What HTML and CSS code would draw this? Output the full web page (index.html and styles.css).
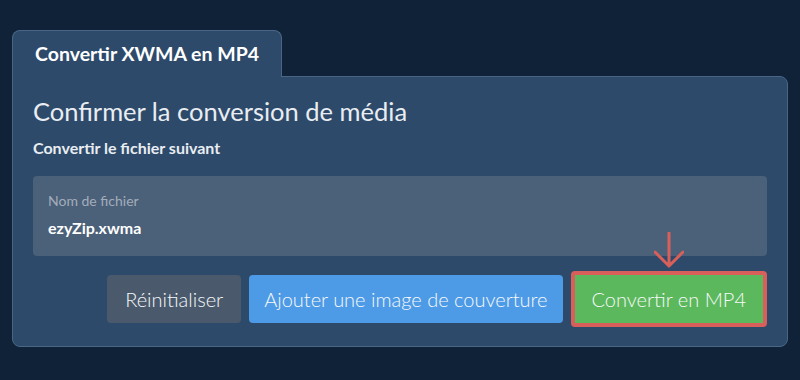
FILE: index.html
```html
<!DOCTYPE html>
<html lang="fr">
<head>
    <meta charset="UTF-8">
    <meta name="viewport" content="width=device-width, initial-scale=1.0">
    <title>Convertir XWMA en MP4</title>
    <link rel="stylesheet" href="styles.css">
</head>
<body>
    <div class="wrapper">
        <div class="tab">Convertir XWMA en MP4</div>
        <div class="card">
            <h1>Confirmer la conversion de média</h1>
            <p class="subtitle">Convertir le fichier suivant</p>
            <div class="file-box">
                <div class="file-label">Nom de fichier</div>
                <div class="file-name">ezyZip.xwma</div>
            </div>
            <div class="actions">
                <button class="btn btn-reset">Réinitialiser</button>
                <button class="btn btn-cover">Ajouter une image de couverture</button>
                <div class="convert-wrap">
                    <!-- pointer arrow over the main button -->
                    <svg class="pointer" width="30" height="36" viewBox="0 0 30 36">
                        <path d="M15 1 V34 M1 20 L15 34 L29 20" fill="none" stroke="#d9605a" stroke-width="3" stroke-linecap="round" stroke-linejoin="round"/>
                    </svg>
                    <button class="btn btn-convert">Convertir en MP4</button>
                </div>
            </div>
        </div>
    </div>
</body>
</html>
```

FILE: styles.css
```css
body {
    font-family: Lato, "Open Sans", sans-serif;
    background-color: #0f2238;
    margin: 0;
    padding: 0;
    color: #e9edf2;
}

.wrapper {
    margin: 30px 12px 0 12px;
}

.tab {
    display: inline-block;
    position: relative;
    z-index: 1;
    background-color: #2d4a6a;
    border: 1px solid #4a6686;
    border-bottom: none;
    border-radius: 8px 8px 0 0;
    padding: 11px 22px 0 22px;
    height: 35px;
    margin-bottom: -1px;
    font-size: 19.5px;
    font-weight: bold;
    color: #fff;
    box-sizing: content-box;
}

.card {
    background-color: #2d4a6a;
    border: 1px solid #4a6686;
    border-radius: 0 8px 8px 8px;
    padding: 19px 20px 19px 20px;
}

h1 {
    margin: 0;
    font-size: 25.5px;
    font-weight: normal;
    line-height: 1.2;
}

.subtitle {
    margin: 11px 0 0 0;
    font-size: 16px;
    font-weight: bold;
    line-height: 1.2;
}

.file-box {
    margin-top: 19px;
    background-color: #4b6079;
    border-radius: 4px;
    padding: 17px 15px 19px 15px;
}

.file-label {
    font-size: 14px;
    color: #a3adba;
    line-height: 1.2;
}

.file-name {
    margin-top: 8px;
    font-size: 16px;
    font-weight: bold;
    color: #fff;
    line-height: 1.2;
}

.actions {
    display: flex;
    justify-content: flex-end;
    align-items: center;
    gap: 8px;
    margin-top: 15px;
}

.btn {
    font-family: Lato, "Open Sans", sans-serif;
    font-size: 20px;
    font-weight: 300;
    color: #f6f8fa;
    border: none;
    border-radius: 4px;
    height: 48px;
    padding: 0 17px;
    cursor: pointer;
}

.btn-reset {
    background-color: #4a5a6c;
    padding: 0 18px;
}

.btn-cover {
    background-color: #4d9be6;
    padding: 0 15px;
}

.convert-wrap {
    position: relative;
}

.btn-convert {
    display: block;
    background-color: #5cb85c;
    border: 4px solid #d9605a;
    height: 56px;
    padding: 0 17px;
}

.pointer {
    position: absolute;
    left: 50%;
    margin-left: -15px;
    bottom: 100%;
    margin-bottom: 3px;
}
```
